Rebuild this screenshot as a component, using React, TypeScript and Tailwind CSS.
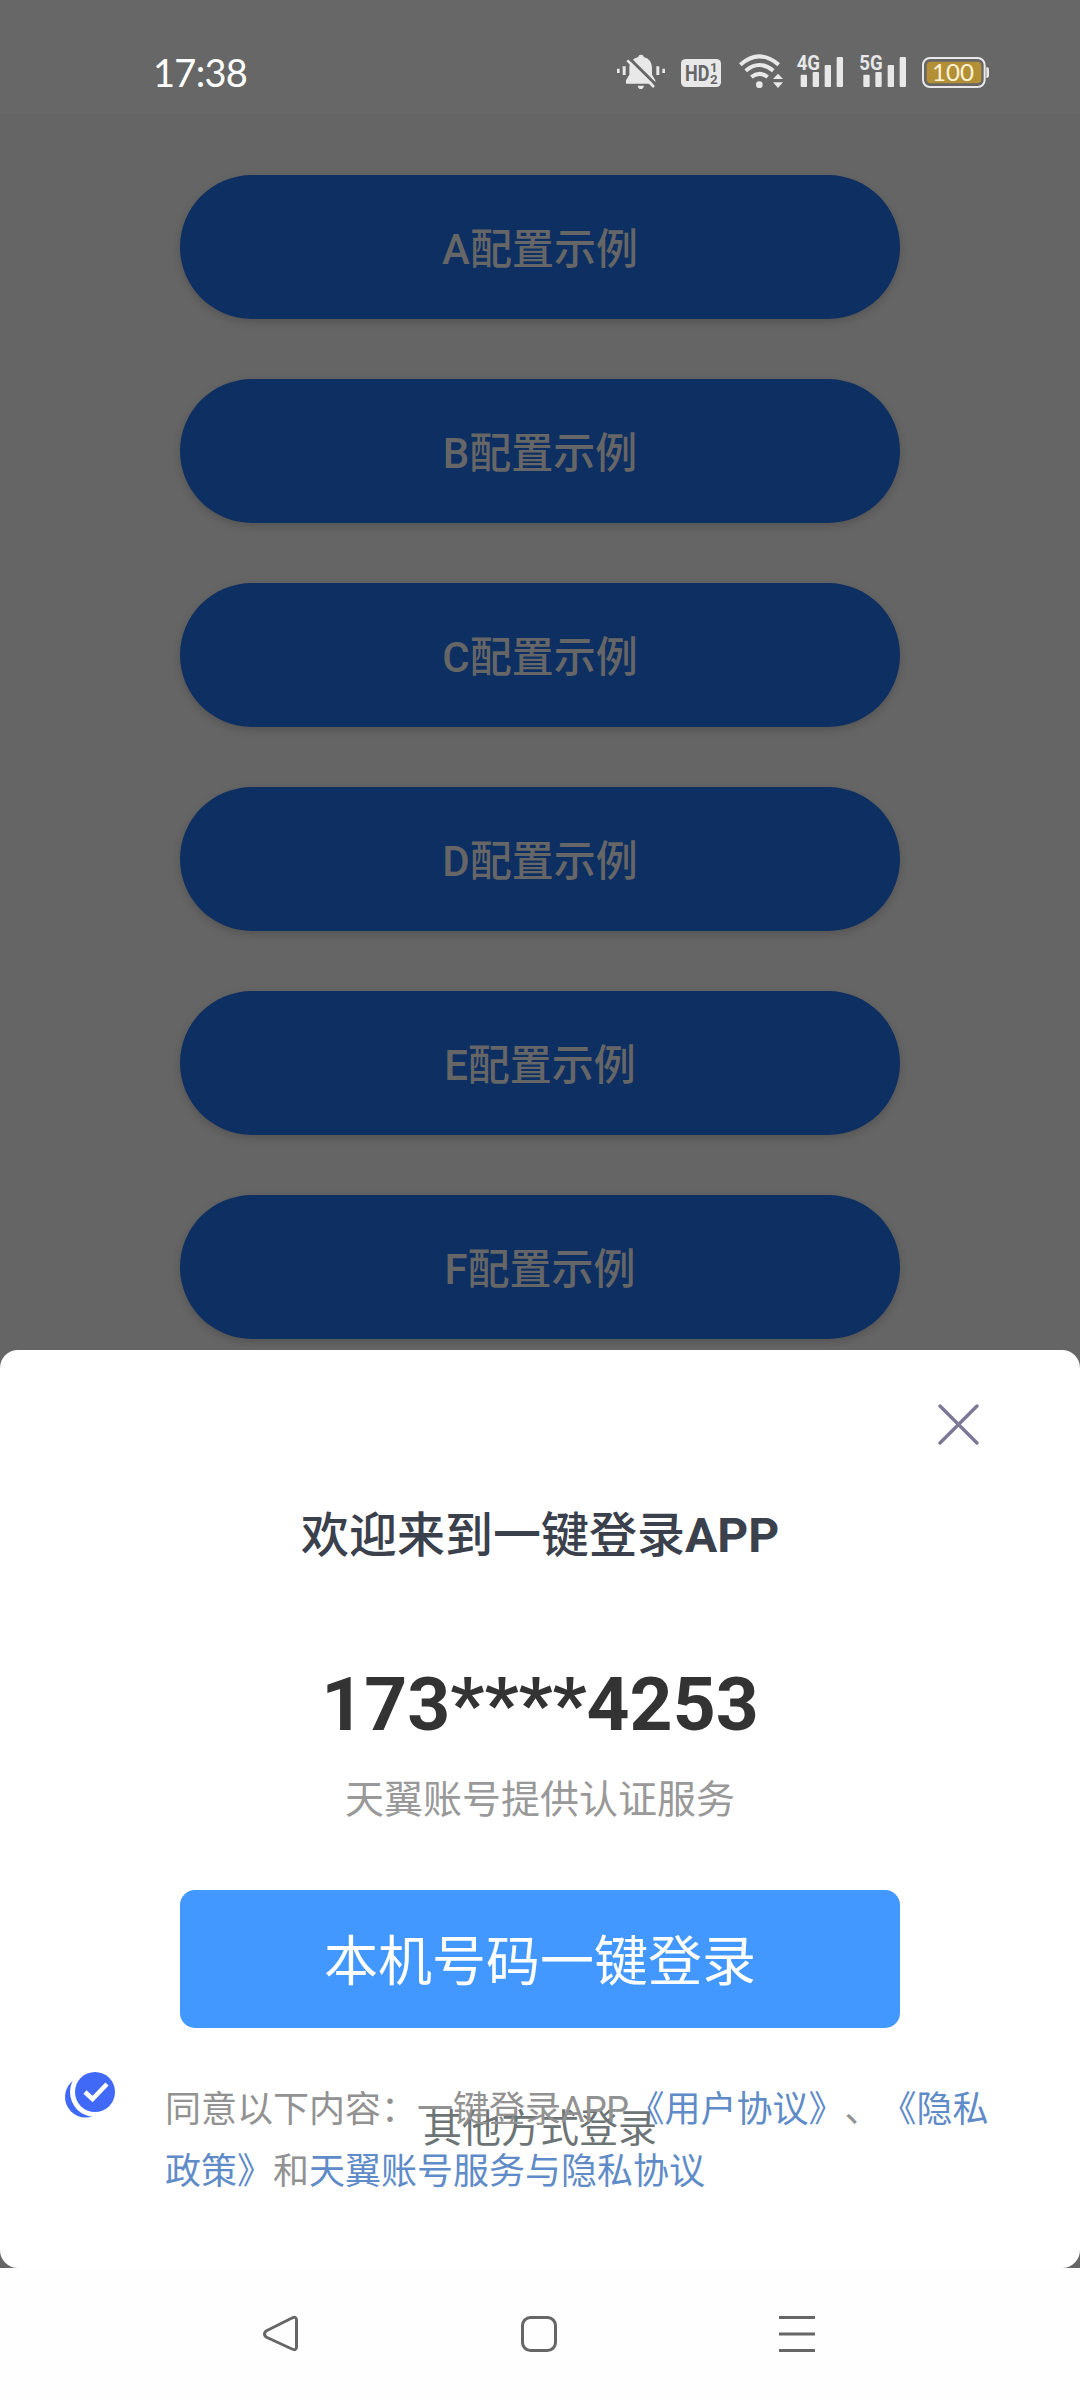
const options = ['A', 'B', 'C', 'D', 'E', 'F'];

function StatusIcons() {
  return (
    <svg className="block h-[70px] w-[400px]" viewBox="0 0 1200 210" fill="#e8e8e8">
      {/* muted bell */}
      <path d="M51 86h8v13h-8zM68 79h9v26h-9zM169 79h9v26h-9zM187 86h8v13h-8z" />
      <path d="M115 51c0-9 16-9 16 0 17 4 25 17 25 34v19l10 17v10H78v-10l10-17V85c0-17 10-30 27-34z" />
      <path d="M113 137h19q-2 10-9.500 10t-9.500-10z" />
      <path d="M88 55L172 138" stroke="#666" strokeWidth="9" />
      <path d="M82 61L162 141" stroke="#e8e8e8" strokeWidth="8" />
      {/* HD badge */}
      <rect x="243" y="57" width="120" height="84" rx="14" />
      <g fill="#666" fontFamily="Roboto, sans-serif" fontWeight="700">
        <text x="255" y="123" fontSize="66" textLength="73" lengthAdjust="spacingAndGlyphs">HD</text>
        <text x="330" y="97" fontSize="40">1</text>
        <text x="330" y="131" fontSize="40">2</text>
      </g>
      {/* wifi */}
      <g fill="none" stroke="#e8e8e8" strokeWidth="12">
        <path d="M421 74Q478 24 536 74" />
        <path d="M437 92Q478 58 520 92" />
        <path d="M454 111Q478 92 503 111" />
      </g>
      <circle cx="478" cy="134" r="10" />
      <path d="M519 117L534 101L549 117zM519 127H549L534 144z" />
      {/* mobile signal */}
      <g fontFamily="Roboto, sans-serif" fontWeight="700" fontSize="60">
        <text x="590" y="89" textLength="70" lengthAdjust="spacingAndGlyphs">4G</text>
        <text x="778" y="89" textLength="70" lengthAdjust="spacingAndGlyphs">5G</text>
      </g>
      <rect x="602" y="104" width="19" height="37" rx="3" />
      <rect x="638" y="96" width="19" height="45" rx="3" />
      <rect x="674" y="75" width="19" height="66" rx="3" />
      <rect x="710" y="51" width="19" height="90" rx="3" />
      <rect x="790" y="104" width="19" height="37" rx="3" />
      <rect x="826" y="96" width="19" height="45" rx="3" />
      <rect x="863" y="75" width="19" height="66" rx="3" />
      <rect x="899" y="51" width="19" height="90" rx="3" />
      {/* battery */}
      <rect x="969" y="54" width="185" height="87" rx="21" fill="none" stroke="#e8e8e8" strokeWidth="6" />
      <rect x="980" y="65" width="164" height="65" rx="12" fill="#b38f35" />
      <path d="M1159 81q8 0 8 8v17q0 8-8 8z" />
      <text x="996" y="123" fontFamily="Lato, sans-serif" fontSize="72" fontWeight="400" fill="#fff3da" textLength="126" lengthAdjust="spacingAndGlyphs">100</text>
    </svg>
  );
}

function StatusBar() {
  return (
    <header className="flex h-[115px] items-start justify-between bg-[#676767] pt-10 pr-20 pl-[153px]">
      <time className="mt-[8px] font-['Lato','Noto_Sans_CJK_SC',sans-serif] text-[38px] leading-[48px] font-normal tracking-[-0.7px] text-white">17:38</time>
      <StatusIcons />
    </header>
  );
}

function LoginSheet() {
  return (
    <section className="absolute inset-x-0 top-[1350px] flex h-[918px] flex-col items-center rounded-[18px] bg-white">
      <button className="mt-[54px] mr-[101px] self-end" aria-label="关闭">
        <svg className="block size-[41px]" viewBox="0 0 41 41" stroke="#7d7896" strokeWidth="3.400" strokeLinecap="round">
          <path d="M2 2L39 39M39 2L2 39" />
        </svg>
      </button>
      <h1 className="mt-[56px] text-[48px] leading-[70px] font-medium text-[#3a404c]">
        欢迎来到一键登录<span className="font-bold">APP</span>
      </h1>
      <p className="mt-[89px] text-[75px] leading-[88px] font-bold text-[#333]">173****4253</p>
      <p className="mt-[24px] text-[39px] leading-[56px] text-[#999]">天翼账号提供认证服务</p>
      <button className="mt-[62px] h-[138px] w-[720px] rounded-[15px] bg-[#4398ff] pt-[6px] text-[54px] text-white">本机号码一键登录</button>
      <div className="relative z-10 mt-[36px] flex w-full pl-[62px]">
        <svg className="mt-[5px] block h-[54px] w-[56px] shrink-0" viewBox="62 2069 56 54">
          <circle cx="85.500" cy="2097" r="20.500" fill="#4169f8" />
          <circle cx="95" cy="2092" r="25" fill="#fff" />
          <circle cx="95" cy="2092" r="20" fill="#4169f8" />
          <path d="M85 2092L92.500 2099L107 2084" fill="none" stroke="#fff" strokeWidth="4.500" />
        </svg>
        <p className="mt-[15px] ml-[47px] text-[36px] leading-[62px] text-[#929292] [text-spacing-trim:space-all]">
          同意以下内容：一键登录<span className="tracking-[-0.5px]">APP</span><a className="text-[#5f8cc8]">《用户协议》</a>、<a className="text-[#5f8cc8]">《隐私<br />政策》</a>和<a className="text-[#5f8cc8]">天翼账号服务与隐私协议</a>
        </p>
      </div>
      <a className="absolute top-[751px] text-[39px] leading-[56px] text-[#6c7476]">其他方式登录</a>
    </section>
  );
}

function NavigationBar() {
  return (
    <nav className="absolute inset-x-0 bottom-0 flex h-[132px] items-start justify-between bg-[#fefefe] pt-[46px] pr-[263px] pl-[261px]">
      <svg className="size-10" viewBox="0 0 40 40" fill="none" stroke="#666" strokeWidth="3" strokeLinejoin="round">
        <path d="M5 17L31 4Q35.500 2 35.500 6V33Q35.500 37 31 35L5 23Q2 20 5 17z" />
      </svg>
      <svg className="size-10" viewBox="0 0 40 40" fill="none" stroke="#666" strokeWidth="3">
        <rect x="3.500" y="3.500" width="33" height="33" rx="8" />
      </svg>
      <svg className="size-10" viewBox="0 0 40 40" stroke="#666" strokeWidth="3">
        <path d="M2 3.500H38M2 20H38M2 36.500H38" />
      </svg>
    </nav>
  );
}

export default function App() {
  return (
    <main className="relative h-[2400px] w-[1080px] overflow-hidden bg-[#656565] font-['Roboto','Noto_Sans_CJK_SC',sans-serif]">
      <StatusBar />
      <div className="flex flex-col items-center gap-[60px] pt-[60px]">
        {options.map((name) => (
          <button key={name} className="h-[144px] w-[720px] rounded-[72px] bg-[#0e2f62] pt-1 text-[42px] font-medium text-[#666] shadow-[0_3px_9px_rgba(0,0,0,0.18)]">
            {name}配置示例
          </button>
        ))}
      </div>
      <LoginSheet />
      <NavigationBar />
    </main>
  );
}
